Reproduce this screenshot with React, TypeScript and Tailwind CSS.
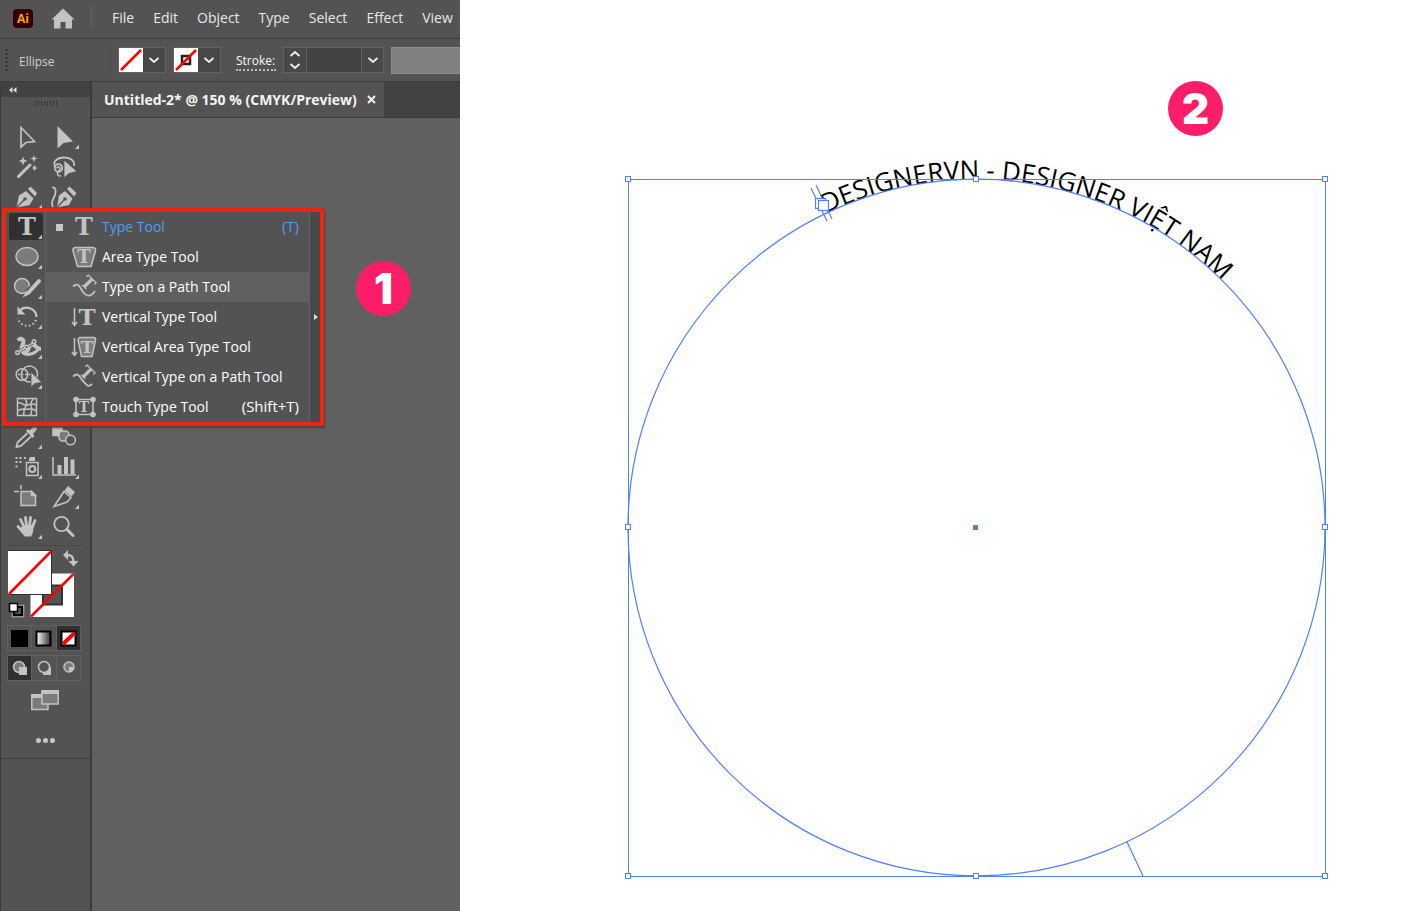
import clsx from "clsx";
import { ReactNode } from "react";

const LIGHT = "#c3c3c3";
const MID = "#7b7b7b";
const PANEL = "#535353";
const GUIDE = "#4f80ff";

const menus = ["File", "Edit", "Object", "Type", "Select", "Effect", "View"];

interface Tool {
  name: string;
  icon: ReactNode;
  more?: boolean;
  active?: boolean;
}

interface SlabTProps {
  x: number;
  y: number;
  size: number;
  turn?: number;
}

// x is the middle of the letter, y its baseline; turn spins it round its own middle
function SlabT({ x, y, size, turn = 0 }: SlabTProps) {
  return (
    <text
      x={x}
      y={y}
      fontSize={size}
      textAnchor="middle"
      fill={LIGHT}
      transform={turn ? `rotate(${turn} ${x} ${y - size * 0.36})` : undefined}
      fontFamily="'DejaVu Serif', serif"
      fontWeight="bold"
    >
      T
    </text>
  );
}

// Every tool drawing uses the 37x30 cell as its own coordinate space
const toolRows: [Tool, Tool | null][] = [
  [
    {
      name: "Selection Tool",
      icon: <path d="M13 5.5V25L18 20.5 26.5 19.5Z" fill="none" stroke={LIGHT} strokeWidth="1.7" />,
    },
    {
      name: "Direct Selection Tool",
      more: true,
      icon: <path d="M12.5 4V26.5L18.5 21 28 19.5Z" fill={LIGHT} />,
    },
  ],
  [
    {
      name: "Magic Wand Tool",
      icon: (
        <g fill={LIGHT}>
          <path d="M10.5 24.5 22 13" stroke={LIGHT} strokeWidth="3" strokeLinecap="round" />
          <path d="M15 4.500 16.200 7.800 19.500 9 16.200 10.200 15 13.500 13.800 10.200 10.500 9 13.800 7.800Z" />
          <path d="M26 3 26.8 5.5 29.5 6.5 26.8 7.5 26 10.5 25 7.5 22.5 6.5 25 5.5Z" />
          <path d="M26.5 12.5 27.5 15 29.5 16 27.5 17 26.5 19 25.5 17 24 16 25.5 15Z" />
        </g>
      ),
    },
    {
      name: "Lasso Tool",
      icon: (
        <g fill="none" stroke={LIGHT} strokeWidth="1.8">
          <path d="M10.5 15C7 10 12 5.5 19 5.5 26 5.5 30 9 29 14" />
          <circle cx="13.5" cy="16" r="3.8" />
          <path d="M12 16.5C12 14 15.5 14.5 15 17S12 19 12.5 22C13 24 14.5 24.5 16 23.5" strokeWidth="1.5" />
          <path d="M19 8V26L24 21.5 32 19.5Z" fill={LIGHT} stroke={PANEL} strokeWidth="0.8" />
        </g>
      ),
    },
  ],
  [
    {
      name: "Pen Tool",
      more: true,
      icon: (
        <g fill={LIGHT}>
          <path d="M8.5 25.5 11 13.5 18 9 25.5 16.5 21.5 23Z" />
          <path d="M20 7 22.5 4.5 29 11 27 14.5Z" />
          <path d="M8.5 25.5 17 17" stroke={PANEL} strokeWidth="1.2" />
          <circle cx="17" cy="17" r="1.8" fill={PANEL} />
        </g>
      ),
    },
    {
      name: "Curvature Tool",
      icon: (
        <g fill={LIGHT}>
          <path d="M12 25.5 14 13.5 20 9 27.5 16.5 24 23Z" />
          <path d="M22 7 24.5 4.5 31.5 11 29 14.5Z" />
          <path d="M12 25.5 20 17" stroke={PANEL} strokeWidth="1.2" />
          <circle cx="20" cy="17" r="1.8" fill={PANEL} />
          <path d="M7 5.5C11 5 11 9 10 13S5 19 8 25" fill="none" stroke={LIGHT} strokeWidth="1.8" />
        </g>
      ),
    },
  ],
  [{ name: "Type Tool", more: true, active: true, icon: <SlabT x={19} y={23} size={24} /> }, null],
  [
    {
      name: "Ellipse Tool",
      more: true,
      icon: <ellipse cx="19" cy="14.5" rx="11" ry="9" fill={MID} stroke={LIGHT} strokeWidth="1.5" />,
    },
    null,
  ],
  [
    {
      name: "Blob Brush Tool",
      more: true,
      icon: (
        <g fill="none">
          <circle cx="14" cy="14" r="7.5" fill={MID} stroke={LIGHT} strokeWidth="1.5" />
          <path d="M32 8 20 21" stroke={PANEL} strokeWidth="7" />
          <path d="M31 9 21.5 19.5" stroke={LIGHT} strokeWidth="4" strokeLinecap="round" />
          <path d="M19 18.5 22.5 22 14.5 25.5Z" fill={LIGHT} />
        </g>
      ),
    },
    null,
  ],
  [
    {
      name: "Rotate Tool",
      more: true,
      icon: (
        <g fill="none" stroke={LIGHT} strokeWidth="2.2">
          <path d="M12 8.5C17 3 28 6 28.5 15" />
          <path d="M28 18C25 26 12 26 10 16" strokeDasharray="1.5 2.5" />
          <path d="M9.5 4.5V12.5H17.5Z" fill={LIGHT} stroke="none" />
        </g>
      ),
    },
    null,
  ],
  [
    {
      name: "Puppet Warp Tool",
      more: true,
      icon: (
        <g fill="none" stroke={LIGHT} strokeWidth="1.5">
          <path d="M10 8.500C14 4 17 9 14.500 13 12 18 15 23 19 19 22 16 21 10 26 13 29 15 29 17 33 17" strokeWidth="4" />
          <path d="M15 21C19 24 27 22 30 17.500" strokeWidth="3" />
          <path d="M9.5 20.5 18.5 15 26 10" stroke={PANEL} strokeWidth="3" />
          <path d="M9.5 20.5 18.5 15 26 10" />
          <circle cx="9.5" cy="20.5" r="1.8" fill={PANEL} />
          <circle cx="18.5" cy="15" r="1.8" fill={PANEL} />
          <circle cx="26" cy="9.5" r="1.8" fill={PANEL} />
        </g>
      ),
    },
    null,
  ],
  [
    {
      name: "Shape Builder Tool",
      more: true,
      icon: (
        <g fill="none" stroke={LIGHT} strokeWidth="1.5">
          <circle cx="21.5" cy="12" r="8" />
          <circle cx="14" cy="12.5" r="5.8" fill={PANEL} />
          <path d="M16 6.500A8 8 0 0 0 15 17.500" />
          <path d="M10 12.5H25" strokeDasharray="2 1.5" />
          <path d="M23 10V25L27 21.5 34 20.5Z" fill={LIGHT} stroke={PANEL} strokeWidth="0.8" />
        </g>
      ),
    },
    null,
  ],
  [
    {
      name: "Mesh Tool",
      icon: (
        <g fill="none" stroke={LIGHT} strokeWidth="1.5">
          <path d="M9.5 6.5H28.5V23.5H9.5Z" />
          <path d="M17 6.5C22 12 14 17 16 23.5M26 6.5C19 12 27 17 22 23.5M9.5 11C14 9 15 15 20 13S26 12 28.5 13M9.5 19C15 15 17 18 21 17S27 18 28.5 19" />
        </g>
      ),
    },
    null,
  ],
  [
    {
      name: "Eyedropper Tool",
      more: true,
      icon: (
        <g>
          <path d="M19.5 11 9.5 20.5 8.5 25 13 24 23 14.5" fill="none" stroke={LIGHT} strokeWidth="1.8" />
          <path d="M18 8.5 20 7 22 8.5 25 4.5C27 3 30 5.5 28.5 8L25 12 26.5 14 24.5 16Z" fill={LIGHT} />
        </g>
      ),
    },
    {
      name: "Blend Tool",
      icon: (
        <g stroke={LIGHT} strokeWidth="1.5">
          <path d="M8 5.5H17V13.5H8Z" fill={LIGHT} />
          <rect x="14" y="9" width="10" height="10" rx="3.5" fill={MID} />
          <circle cx="25.5" cy="18" r="4.8" fill={PANEL} />
        </g>
      ),
    },
  ],
  [
    {
      name: "Symbol Sprayer Tool",
      more: true,
      icon: (
        <g fill={LIGHT}>
          <path d="M18.5 10.5H30V23.5H18.5Z" fill="none" stroke={LIGHT} strokeWidth="1.5" />
          <path d="M21 9V6L23 5H27V9Z" />
          <circle cx="24.3" cy="17" r="3" fill="none" stroke={LIGHT} strokeWidth="2" />
          <path d="M7.5 5H9.5V7H7.5ZM11.5 5H13.5V7H11.5ZM16 5H18V7H16ZM7.5 9H9.5V11H7.5ZM11.5 9H13.5V11H11.5ZM7.5 13.5H9.5V15.5H7.5Z" />
        </g>
      ),
    },
    {
      name: "Column Graph Tool",
      more: true,
      icon: (
        <g fill={LIGHT}>
          <path d="M8 5V23H31" fill="none" stroke={LIGHT} strokeWidth="1.5" />
          <path d="M12.5 13H16.5V22H12.5ZM19 5H23V22H19ZM25.5 7.5H29.5V22H25.5Z" />
        </g>
      ),
    },
  ],
  [
    {
      name: "Artboard Tool",
      icon: (
        <g fill="none" stroke={LIGHT} strokeWidth="1.5">
          <path d="M13 9.5H23.5L27.5 13.5V23.5H13Z" fill={MID} />
          <path d="M23.5 9.5V13.5H27.5Z" fill={LIGHT} />
          <path d="M6 9.5H11M13 3V7.5" />
        </g>
      ),
    },
    {
      name: "Slice Tool",
      more: true,
      icon: (
        <g>
          <path d="M9 24.5 19 9.5 26 15.5 22 20Z" fill="none" stroke={LIGHT} strokeWidth="1.6" />
          <path d="M19.5 8.5 23 4 30 10 26.5 14.5Z" fill={LIGHT} />
        </g>
      ),
    },
  ],
  [
    {
      name: "Hand Tool",
      more: true,
      icon: (
        <g fill="none" stroke={LIGHT} strokeWidth="2.8" strokeLinecap="round">
          <path d="M16 15 12.5 7.5M18.5 14 17.5 5.5M21.5 14 22.5 5.5M24.5 15 27 8.5M15 20 10 14.5" />
          <path d="M14.5 13H25.5C25.5 20 25 21 23 24.5H16.5L12 18Z" fill={LIGHT} stroke="none" />
        </g>
      ),
    },
    {
      name: "Zoom Tool",
      icon: (
        <g fill="none" stroke={LIGHT}>
          <circle cx="16.5" cy="12" r="7.2" strokeWidth="1.8" />
          <path d="M22 17.5 28 23.5" strokeWidth="3" strokeLinecap="round" />
        </g>
      ),
    },
  ],
];

const flyoutItems: { label: string; keys?: string; icon: ReactNode }[] = [
  { label: "Type Tool", keys: "(T)", icon: <SlabT x={16} y={23} size={24} /> },
  {
    label: "Area Type Tool",
    icon: (
      <g>
        <path d="M7 5.5H25Q28 6 27.5 9L23 24.5H9.5L5 9Q4.5 6 7 5.5Z" fill={MID} stroke={LIGHT} strokeWidth="1.5" />
        <SlabT x={16} y={21} size={18} />
      </g>
    ),
  },
  {
    label: "Type on a Path Tool",
    icon: (
      <g>
        <path d="M5 14.5C11 9.5 12 16 15 20S22 26 27 19" fill="none" stroke={LIGHT} strokeWidth="1.8" />
        <SlabT x={20} y={17} size={17} turn={45} />
      </g>
    ),
  },
  {
    label: "Vertical Type Tool",
    icon: (
      <g>
        <path d="M6.5 6V23M4 20 6.5 23.5 9 20" fill="none" stroke={LIGHT} strokeWidth="1.5" />
        <SlabT x={19} y={23} size={23} />
      </g>
    ),
  },
  {
    label: "Vertical Area Type Tool",
    icon: (
      <g>
        <path d="M6.5 6V23M4 20 6.5 23.5 9 20" fill="none" stroke={LIGHT} strokeWidth="1.5" />
        <path d="M12 5.5H26Q28 6 27.5 8L24 24.5H13.5L10 8Q10 6 12 5.5Z" fill={MID} stroke={LIGHT} strokeWidth="1.5" />
        <SlabT x={19} y={21} size={17} />
      </g>
    ),
  },
  {
    label: "Vertical Type on a Path Tool",
    icon: (
      <g>
        <path d="M5 14.5C11 9.5 11 15 15 19S20 26 24 22" fill="none" stroke={LIGHT} strokeWidth="1.8" />
        <SlabT x={19} y={17} size={17} turn={45} />
      </g>
    ),
  },
  {
    label: "Touch Type Tool",
    keys: "(Shift+T)",
    icon: (
      <g fill={LIGHT}>
        <path d="M8 7.5H25V22.5H8Z" fill="none" stroke={LIGHT} strokeWidth="1.5" />
        <circle cx="8" cy="7.5" r="2.8" />
        <circle cx="25" cy="7.5" r="2.8" />
        <circle cx="8" cy="22.5" r="2.8" />
        <circle cx="25" cy="22.5" r="2.8" />
        <SlabT x={16} y={20} size={14} />
      </g>
    ),
  },
];

function Chevron({ up = false }: { up?: boolean }) {
  return (
    <svg viewBox="0 0 10 6" className="h-[6px] w-[10px]" fill="none" stroke="#f2f2f2" strokeWidth="1.8">
      <path d={up ? "M0.5 5 5 1 9.5 5" : "M0.5 1 5 5 9.5 1"} />
    </svg>
  );
}

function MenuBar() {
  return (
    <header className="flex h-[39px] items-center border-b border-[#3b3b3b] pb-[2px] pl-[13px]">
      <svg viewBox="0 0 20 19" className="h-[19px] w-5 shrink-0" aria-label="Illustrator">
        <rect width="20" height="19" rx="4" fill="#330000" />
        <text x="10" y="14" fontSize="12" textAnchor="middle" fill="#ff9a00" className="font-['Open_Sans',sans-serif] font-bold">
          Ai
        </text>
      </svg>
      <button aria-label="Home" className="ml-[18px]">
        <svg viewBox="0 0 24 21" className="h-[21px] w-6" fill={LIGHT}>
          <path d="M12 0.5 23.5 11.5H21V20.5H14.5V14H9.5V20.5H3V11.5H0.5Z" />
        </svg>
      </button>
      <span className="mr-5 ml-4 h-6 w-px bg-[#626262]" />
      <nav className="flex gap-[19px]">
        {menus.map((menu) => (
          <button key={menu} className="text-sm text-[#e8e8e8]">
            {menu}
          </button>
        ))}
      </nav>
    </header>
  );
}

function SwatchPicker({ name, ring = false }: { name: string; ring?: boolean }) {
  return (
    <div className="flex h-[26px] w-12 border border-[#616161] bg-[#484848]">
      <svg viewBox="0 0 24 24" className="h-6 w-6 bg-white">
        {ring && <path d="M8 8H16V16H8Z" fill="none" stroke="#222" strokeWidth="2.5" />}
        <path d="M2 22 22 2" stroke="#f00" strokeWidth="2.5" />
      </svg>
      <button aria-label={name} className="flex flex-1 items-center justify-center">
        <Chevron />
      </button>
    </div>
  );
}

function OptionsBar() {
  return (
    <div className="flex h-[43px] items-center border-b border-[#3b3b3b] text-xs">
      <span className="ml-[5px] flex flex-col gap-[2px]">
        {[0, 1, 2, 3, 4, 5].map((n) => (
          <i key={n} className="h-[2px] w-[3px] bg-[#3d3d3d]" />
        ))}
      </span>
      <span className="ml-[11px] w-[91px] pt-[3px] text-[#d0d0d0]">Ellipse</span>
      <div className="flex gap-[7px] border-l border-[#4a4a4a] pl-[7px]">
        <SwatchPicker name="Fill" />
        <SwatchPicker name="Stroke color" ring />
      </div>
      <label
        htmlFor="stroke"
        className="mt-1 ml-[15px] w-[40px] border-b-2 border-dotted border-[#bbb] leading-4 text-[#f8f8f8]"
      >
        Stroke:
      </label>
      <div className="ml-[7px] flex h-[26px] border border-[#616161] bg-[#484848]">
        <div className="flex w-[22px] flex-col items-center justify-around">
          <button aria-label="Increase stroke">
            <Chevron up />
          </button>
          <button aria-label="Decrease stroke">
            <Chevron />
          </button>
        </div>
        <input id="stroke" className="w-14 border-x border-[#616161] bg-[#434343] px-1 text-white" />
        <button aria-label="Stroke weights" className="flex w-[21px] items-center justify-center">
          <Chevron />
        </button>
      </div>
      <span className="ml-[7px] h-[27px] flex-1 border border-r-0 border-[#8e8e8e] bg-[#808080]" />
    </div>
  );
}

function ToolButton({ tool }: { tool: Tool }) {
  return (
    <button aria-label={tool.name} className="h-[30px] w-[37px]">
      <svg viewBox="0 0 37 30" className="h-[30px] w-[37px]">
        {tool.active && <rect x="1" y="1" width="34" height="27" rx="2" fill="#303030" />}
        {tool.icon}
        {tool.more && <path d="M34 22.5V27H30Z" fill={LIGHT} />}
      </svg>
    </button>
  );
}

function ColorControls() {
  return (
    <svg viewBox="0 0 74 72" className="mt-[2px] ml-2 h-[72px] w-[74px]">
      <path d="M22.5 25.5H66V69H22.5Z" fill="#fff" />
      <path d="M35 37.5H54V56.5H35Z" fill={PANEL} stroke="#333" strokeWidth="2" />
      <path d="M23 68.5 65.5 26" stroke="#f00" strokeWidth="2.5" />
      <path d="M0.5 2.5H43.5V46.5H0.5Z" fill="#fff" stroke="#333" />
      <path d="M0 3H43V46H0Z" fill="#fff" />
      <path d="M1 46 43 3.5" stroke="#f00" strokeWidth="2.5" />
      <path d="M59 7C64 7 65.500 9 65.500 14" fill="none" stroke={LIGHT} strokeWidth="2.5" />
      <path d="M55 7 60 2V12ZM65.500 18.500 60.500 13H70.500Z" fill={LIGHT} />
      <path d="M5.5 58.5H14.5V67.5H5.5Z" fill="none" stroke="#bbb" strokeWidth="3.5" />
      <path d="M6 59H14V67H6Z" fill="none" stroke="#000" strokeWidth="2.5" />
      <path d="M1.5 55.5H9.5V63.5H1.5Z" fill="#fff" stroke="#000" strokeWidth="1.5" />
    </svg>
  );
}

const paintModes = [
  { name: "Color", art: <path d="M3 4H20V21H3Z" fill="#000" /> },
  { name: "Gradient", art: <path d="M4.5 5.5H18.5V19.5H4.5Z" fill="url(#fade)" stroke="#000" strokeWidth="2" /> },
  {
    name: "None",
    active: true,
    art: (
      <g>
        <path d="M4.5 5.5H18.5V19.5H4.5Z" fill="#fff" stroke="#000" strokeWidth="2" />
        <path d="M6 18 17.5 7" stroke="#f00" strokeWidth="4" />
      </g>
    ),
  },
];

const drawModes = [
  {
    name: "Draw Normal",
    active: true,
    art: (
      <g>
        <circle cx="11" cy="11" r="5.5" fill={MID} stroke={LIGHT} strokeWidth="1.5" />
        <path d="M11 11H19V19H11Z" fill={LIGHT} />
      </g>
    ),
  },
  {
    name: "Draw Behind",
    art: (
      <g>
        <path d="M11 11H19V19H11Z" fill={LIGHT} />
        <circle cx="12" cy="11" r="5.5" fill={PANEL} stroke={LIGHT} strokeWidth="1.5" />
      </g>
    ),
  },
  {
    name: "Draw Inside",
    art: (
      <g>
        <circle cx="12" cy="11" r="5" fill={MID} stroke={LIGHT} strokeWidth="1.5" />
        <path d="M12 11H17Q16 15 12 16Z" fill={LIGHT} />
      </g>
    ),
  },
];

function ModeRow({ modes }: { modes: { name: string; art: ReactNode; active?: boolean }[] }) {
  return (
    <div className="ml-[7px] flex w-[74px] divide-x divide-[#616161] border border-[#616161]">
      {modes.map((mode) => (
        <button key={mode.name} aria-label={mode.name} className={clsx("flex-1", mode.active && "bg-[#303030]")}>
          <svg viewBox="0 0 23 24" className="h-6 w-[23px]">
            {mode.art}
          </svg>
        </button>
      ))}
    </div>
  );
}

function Toolbox() {
  return (
    <aside className="flex w-[92px] shrink-0 flex-col border-r-2 border-l border-[#3b3b3b]">
      <div className="flex h-[15px] items-center bg-[#424242] pl-2">
        <svg viewBox="0 0 8 6" className="h-[6px] w-2" fill="#ddd">
          <path d="M3.5 0V6L0 3ZM7.5 0V6L4 3Z" />
        </svg>
      </div>
      <div className="mt-1 mb-4 flex justify-center gap-px">
        {[0, 1, 2, 3, 4, 5, 6, 7].map((n) => (
          <i key={n} className="h-[5px] w-[2px] border-r border-[#383838]" />
        ))}
      </div>
      <div className="-ml-px border-b border-[#3b3b3b] pb-[10px]">
        <div className="ml-2 grid w-[76px] grid-cols-[37px_37px] border-b border-[#474747] pb-[3px]">
          {toolRows.map(([left, right]) => [
            <ToolButton key={left.name} tool={left} />,
            right ? <ToolButton key={right.name} tool={right} /> : <span key={left.name + "-gap"} />,
          ])}
        </div>
        <ColorControls />
        <div className="mt-[5px] flex flex-col gap-1">
          <ModeRow modes={paintModes} />
          <ModeRow modes={drawModes} />
        </div>
        <button aria-label="Screen mode" className="mt-2 ml-[31px] block">
          <svg viewBox="0 0 28 22" className="h-[22px] w-7">
            <path d="M0.8 6.5H17V20.5H0.8Z" fill={MID} stroke={LIGHT} strokeWidth="1.5" />
            <path d="M0 5H17V9H0Z" fill={LIGHT} />
            <path d="M11 2H27.2V15H11Z" fill={MID} stroke={LIGHT} strokeWidth="1.5" />
            <path d="M10.5 1H28V5H10.5Z" fill={LIGHT} />
          </svg>
        </button>
        <button aria-label="Edit toolbar" className="mt-[27px] mb-[5px] ml-9 flex gap-[2px]">
          <i className="size-[5px] rounded-full bg-[#c8c8c8]" />
          <i className="size-[5px] rounded-full bg-[#c8c8c8]" />
          <i className="size-[5px] rounded-full bg-[#c8c8c8]" />
        </button>
      </div>
    </aside>
  );
}

function TypeFlyout() {
  return (
    <div className="absolute top-[208px] left-[2px] flex w-[322px] border-4 border-[#ee2410] shadow-[1px_2px_2px_#444]">
      {/* the first toolbox column stays visible here */}
      <div className="w-10 shrink-0 border-r border-[#616161]" />
      <ul className="min-w-0 flex-1 bg-[#535353] text-sm">
        {flyoutItems.map((item, i) => (
          <li key={item.label}>
            <button
              className={clsx(
                "flex h-[30px] w-full items-center pr-[10px]",
                i === 0 ? "text-[#4b9df5]" : "text-white",
                i === 2 && "bg-[#606060]"
              )}
            >
              <span className={clsx("ml-[10px] size-[7px] shrink-0", i === 0 && "bg-[#c8c8c8]")} />
              <svg viewBox="0 0 32 30" className="mr-[2px] ml-[5px] h-[30px] w-8 shrink-0">
                {item.icon}
              </svg>
              <span className="whitespace-nowrap">{item.label}</span>
              <span className="ml-auto text-[15px]">{item.keys}</span>
            </button>
          </li>
        ))}
      </ul>
      <button aria-label="Tear off" className="flex w-[11px] items-center justify-end border-l border-[#616161] bg-[#484848] pr-[2px]">
        <svg viewBox="0 0 4 6" className="h-[6px] w-1" fill="#ddd">
          <path d="M0 0V6L4 3Z" />
        </svg>
      </button>
    </div>
  );
}

function StepBadge({ className, children }: { className: string; children: ReactNode }) {
  return (
    <div
      className={clsx(
        "absolute flex size-[55px] items-center justify-center rounded-full bg-[#fb1d68] font-['Inter',sans-serif] text-[42px] leading-none font-black text-white",
        className
      )}
    >
      {children}
    </div>
  );
}

const handles = [
  [168, 179],
  [516, 179],
  [865, 179],
  [168, 527],
  [865, 527],
  [168, 876],
  [516, 876],
  [865, 876],
];

function Artwork() {
  return (
    <svg viewBox="0 0 960 911" className="block w-full">
      <defs>
        <path id="ring" d="M168 527.5A348.5 348.5 0 0 1 865 527.5A348.5 348.5 0 0 1 168 527.5" />
      </defs>
      <text fontSize="26" className="font-['Open_Sans',sans-serif]">
        <textPath href="#ring" startOffset="391">
          DESIGNERVN - DESIGNER VIỆT NAM
        </textPath>
      </text>
      <g fill="none" stroke={GUIDE} strokeWidth="1.2">
        <rect x="168.5" y="179.5" width="697" height="697" strokeWidth="1" />
        <use href="#ring" />
        <path d="M351 188 367 221M356 185 372 219M667 842 683 876" />
        <rect x="355.5" y="198.5" width="10" height="10" fill="#fff" />
        <rect x="358.5" y="200.5" width="10" height="10" fill="#fff" />
      </g>
      {handles.map(([x, y]) => (
        <rect key={`${x}-${y}`} x={x - 2.5} y={y - 2.5} width="5" height="5" fill="#fff" stroke={GUIDE} />
      ))}
      <rect x="513" y="525" width="5" height="5" fill="#4a80e8" />
    </svg>
  );
}

export default function App() {
  return (
    <div className="flex min-h-screen bg-white font-['Open_Sans',sans-serif]">
      <section className="relative flex w-[460px] shrink-0 flex-col overflow-hidden bg-[#535353]">
        <svg className="absolute size-0" aria-hidden="true">
          <linearGradient id="fade">
            <stop stopColor="#fff" />
            <stop offset="1" stopColor="#333" />
          </linearGradient>
        </svg>
        <MenuBar />
        <OptionsBar />
        <div className="flex flex-1">
          <Toolbox />
          <main className="flex flex-1 flex-col bg-[#606060]">
            <div className="flex h-9 border-b border-[#3b3b3b] bg-[#424242]">
              <div className="flex items-center gap-[10px] bg-[#535353] pr-2 pl-3 text-sm font-bold text-[#f4f4f4]">
                <span className="whitespace-nowrap">Untitled-2* @ 150 % (CMYK/Preview)</span>
                <button aria-label="Close tab">
                  <svg viewBox="0 0 9 9" className="size-[9px]" stroke="#f2f2f2" strokeWidth="2">
                    <path d="M1 1 8 8M8 1 1 8" />
                  </svg>
                </button>
              </div>
            </div>
          </main>
        </div>
        <TypeFlyout />
        <StepBadge className="top-[261px] left-[356px]">1</StepBadge>
      </section>
      <section className="relative min-w-0 flex-1">
        <Artwork />
        <StepBadge className="top-[81px] left-[708px]">2</StepBadge>
      </section>
    </div>
  );
}
